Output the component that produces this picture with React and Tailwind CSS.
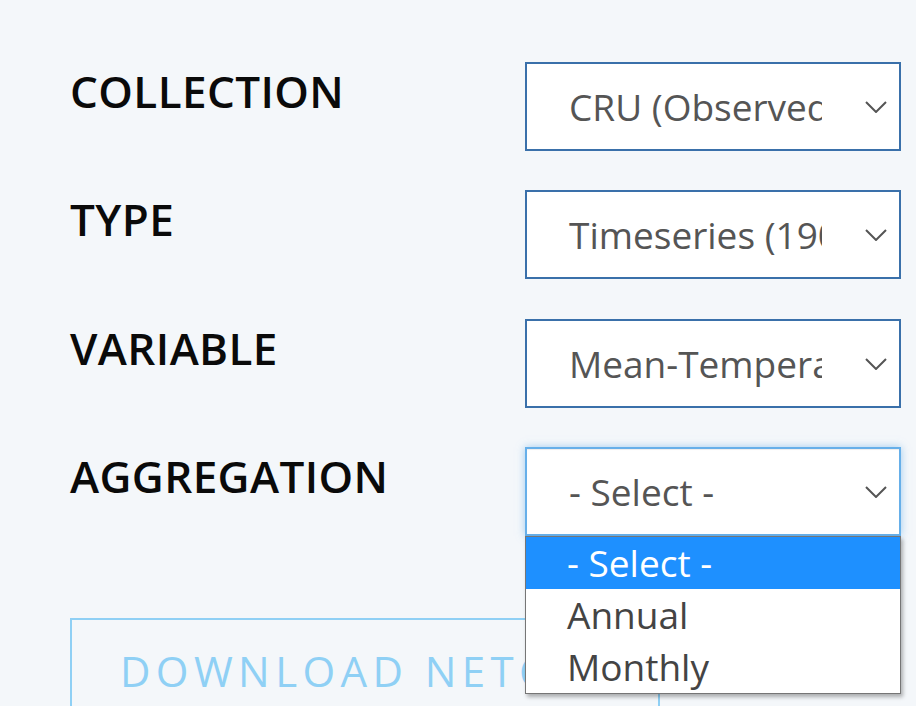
import React from "react";

const font = { fontFamily: '"Open Sans", "Noto Sans", sans-serif' };

function Chevron() {
  return (
    <svg width="22" height="12" viewBox="0 0 22 12" className="shrink-0 ml-[43px] mr-[12px]">
      <path d="M1 1 L11 11 L21 1" fill="none" stroke="#555" strokeWidth="2" />
    </svg>
  );
}

function SelectBox({ value, focused, children }) {
  return (
    <div
      className={
        "relative w-[376px] h-[89px] bg-white flex items-center border-2 " +
        (focused
          ? "border-[#66afe9] shadow-[inset_0_1px_1px_rgba(0,0,0,0.075),0_0_8px_rgba(102,175,233,0.6)]"
          : "border-[#3a70aa]")
      }
    >
      <div className="flex-1 min-w-0 overflow-hidden whitespace-nowrap pl-[42px] text-[37px] text-[#555]">
        {value}
      </div>
      <Chevron />
      {children}
    </div>
  );
}

function Row({ label, value, focused, extra, className = "" }) {
  return (
    <div className={"flex items-start " + className}>
      <div className="w-[455px] mt-[7px] text-[44px] leading-none font-semibold tracking-[0.4px] text-[#0a0a0a]">
        {label}
      </div>
      <SelectBox value={value} focused={focused}>
        {extra}
      </SelectBox>
    </div>
  );
}

export default function App() {
  const dropdown = (
    <div className="absolute left-[-2px] top-[87px] w-[376px] bg-white border border-[#767676] shadow-[2px_3px_4px_rgba(0,0,0,0.3)] z-10 text-[37px]">
      <div className="h-[52px] flex items-center pl-[41px] bg-[#1e90ff] text-white">- Select -</div>
      <div className="h-[52px] flex items-center pl-[41px] text-[#444]">Annual</div>
      <div className="h-[52px] flex items-center pl-[41px] text-[#444]">Monthly</div>
    </div>
  );
  return (
    <div style={font} className="w-[916px] h-[706px] overflow-hidden bg-[#f4f7fa]">
      <div className="pl-[70px] pt-[62px] flex flex-col gap-[39px]">
        <Row label="COLLECTION" value="CRU (Observed)" />
        <Row label="TYPE" value="Timeseries (1901-2020)" />
        <Row label="VARIABLE" value="Mean-Temperature" className="mt-px" />
        <Row label="AGGREGATION" value="- Select -" focused extra={dropdown} />
      </div>
      <div className="pl-[70px] mt-[82px]">
        <div className="w-[590px] h-[130px] border-2 border-[#8fd0f5] pt-[30px] pl-[48px] text-[42px] leading-none tracking-[5.4px] text-[#8fd0f5] whitespace-nowrap">
          DOWNLOAD NETCDF
        </div>
      </div>
    </div>
  );
}
